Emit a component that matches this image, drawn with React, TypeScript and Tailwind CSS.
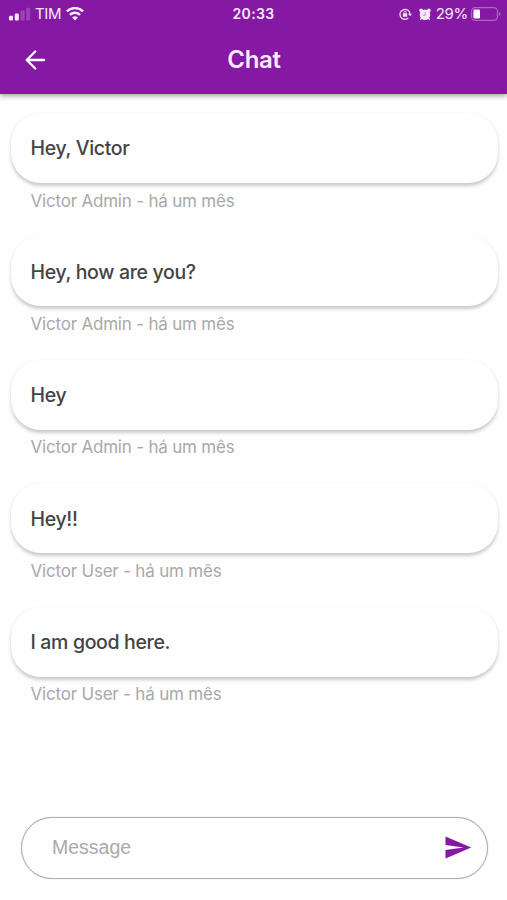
import React from "react";

type Message = { text: string; author: string };

const messages: Message[] = [
  { text: "Hey, Victor", author: "Victor Admin" },
  { text: "Hey, how are you?", author: "Victor Admin" },
  { text: "Hey", author: "Victor Admin" },
  { text: "Hey!!", author: "Victor User" },
  { text: "I am good here.", author: "Victor User" },
];

function SignalIcon() {
  return (
    <svg width="22" height="14" viewBox="0 0 22 14" fill="#fbeaff">
      <rect x="0" y="8.8" width="4" height="4.7" rx="1" />
      <rect x="5.8" y="6.6" width="4" height="6.9" rx="1" />
      <rect x="11.6" y="3.6" width="4" height="9.9" rx="1" opacity=".2" />
      <rect x="17.2" y="0.8" width="4" height="12.7" rx="1" opacity=".2" />
    </svg>
  );
}

function WifiIcon() {
  return (
    <svg width="18" height="14" viewBox="0 0 18 14" fill="none" stroke="#fbeaff" strokeWidth="2.4">
      <path d="M0.9 4.4C5.4 -.1 12.6 -.1 17.1 4.4" />
      <path d="M3.9 7.8C6.8 5 11.2 5 14.1 7.8" />
      <path d="M9 13.4 6.1 10.4C7.8 8.9 10.2 8.9 11.9 10.4Z" fill="#fbeaff" stroke="none" />
    </svg>
  );
}

function RotationLockIcon() {
  return (
    <svg width="13" height="12" viewBox="0 0 13 12" fill="none" stroke="#f3d9fb">
      <path d="M9.3 10.1A5 5 0 1 1 11 6.2" strokeWidth="1.3" />
      <path d="M9 5.7H13L11 8.3Z" fill="#f3d9fb" stroke="none" />
      <rect x="3.8" y="5.2" width="4.4" height="3.5" rx=".5" fill="#f3d9fb" stroke="none" />
      <path d="M4.8 5.6V4.4a1.2 1.2 0 0 1 2.4 0v1.2" strokeWidth=".9" />
    </svg>
  );
}

function AlarmIcon() {
  return (
    <svg width="12" height="13" viewBox="0 0 12 13" fill="#fbeaff">
      <circle cx="6" cy="6.7" r="5.3" />
      <circle cx="2.1" cy="2.4" r="1.8" />
      <circle cx="9.9" cy="2.4" r="1.8" />
      <path d="M2.3 10.4 1.6 11.4M9.7 10.4l.7 1" stroke="#fbeaff" strokeWidth="1.5" strokeLinecap="round" />
      <path d="M6.2 4.3V7.2H4" fill="none" stroke="#8519a3" strokeWidth=".8" strokeOpacity=".6" />
    </svg>
  );
}

function BatteryIcon() {
  return (
    <svg width="30" height="14" viewBox="0 0 30 14" fill="none">
      <rect x=".6" y=".6" width="25.8" height="12.8" rx="3.6" stroke="#fff" strokeOpacity=".34" strokeWidth="1.1" />
      <rect x="2.4" y="2.4" width="6.6" height="9.2" rx="1.4" fill="#fff" />
      <path d="M27.9 4.8c1.9.8 1.9 3.6 0 4.4Z" fill="#fff" fillOpacity=".4" />
    </svg>
  );
}

export default function App() {
  return (
    <div className="flex h-[900px] w-[507px] flex-col overflow-hidden bg-[#fefefe] font-['Inter','Liberation_Sans',sans-serif]">
      <header className="z-10 h-[94px] shrink-0 bg-[#8519a3] text-[#fbeaff] shadow-[0_2px_5px_rgba(0,0,0,0.36)]">
        <div className="grid h-7 grid-cols-3 items-center pl-[9px] pr-[6px]">
          <div className="flex items-center">
            <SignalIcon />
            <span className="ml-[4px] mr-[5px] text-[15px] leading-7 tracking-[-0.4px]">TIM</span>
            <WifiIcon />
          </div>
          <span className="-ml-[3px] text-center text-[14px] font-semibold leading-7 tracking-[0.35px]">20:33</span>
          <div className="flex items-center justify-end">
            <RotationLockIcon />
            <span className="ml-[7px] mr-[5px]"><AlarmIcon /></span>
            <span className="mr-[3px] text-[15px] leading-7 tracking-[-0.3px]">29%</span>
            <BatteryIcon />
          </div>
        </div>
        <div className="grid h-[64px] grid-cols-3 items-center px-[25px]">
          <svg width="21" height="20" viewBox="0 0 21 20" fill="none" stroke="#fff" strokeWidth="2.3" strokeLinecap="round" strokeLinejoin="round" aria-label="Back">
            <path d="M10.2 1.5 1.7 10l8.5 8.5M2 10h17.2" />
          </svg>
          <h1 className="pl-px text-center text-[24px] font-semibold leading-8 tracking-[-0.3px]">Chat</h1>
        </div>
      </header>

      <main className="flex flex-1 flex-col pl-[11px] pr-[9px] pt-[19px]">
        {messages.map((m, i) => (
          <article key={i} className="h-[123.4px] shrink-0">
            <div className="flex h-[70px] items-center rounded-[30px] bg-[#fefefe] px-[19.5px] pt-[0.8px] shadow-[0_2.5px_3.5px_rgba(0,0,0,0.2)]">
              <p className="text-[19.5px] font-medium leading-6 tracking-[-0.34px] text-[#444444]">{m.text}</p>
            </div>
            <p className="pl-[19.5px] pt-[5.5px] text-[17px] leading-6 tracking-[-0.2px] text-[#a9a9a9]">{m.author} - há um mês</p>
          </article>
        ))}
      </main>

      <footer className="px-[21px] pb-[21.5px]">
        <div className="flex h-[62px] w-[467px] items-center justify-between rounded-full border-[1.5px] border-[#b0b0b0] bg-[#fefefe] pl-[30px] pr-[15px] shadow-[0_0_1px_#b0b0b0]">
          <input
            aria-label="Message"
            placeholder="Message"
            className="w-80 bg-transparent pt-px font-['Liberation_Sans',sans-serif] text-[19.5px] text-[#3f3f3f] outline-none placeholder:text-[#aaaaaa]"
          />
          <svg width="27" height="23" viewBox="0 0 27 23" fill="#8519a3" aria-label="Send" className="-mt-px">
            <path d="M.5 .5 26.2 11.5.5 22.5V14L18.5 11.5.5 9Z" />
          </svg>
        </div>
      </footer>
    </div>
  );
}
